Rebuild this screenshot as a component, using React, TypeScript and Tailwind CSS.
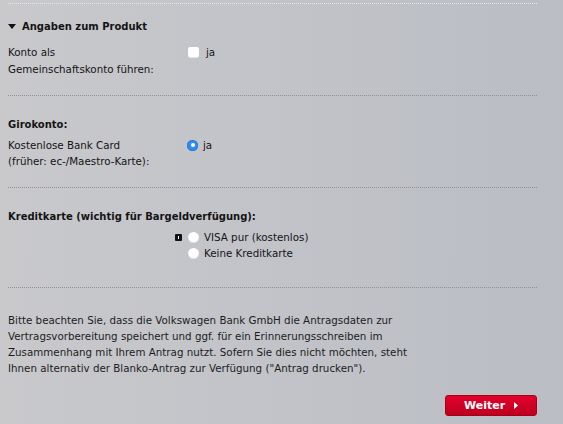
import { useState } from "react";

const sep = "mx-2 w-[529px] border-t border-dotted border-[#8f9196]";

function Radio({ checked }: { checked?: boolean }) {
  return checked ? (
    <span className="flex h-[11px] w-[11px] shrink-0 items-center justify-center rounded-full bg-[#2f8cf5] shadow-[inset_0_0_0_1px_#2a7ad8]">
      <span className="h-[4px] w-[4px] rounded-full bg-white" />
    </span>
  ) : (
    <span className="block h-[11px] w-[11px] shrink-0 rounded-full bg-white shadow-[inset_0_-1px_1px_rgba(0,0,0,0.12)]" />
  );
}

export default function App() {
  const [gemeinsam, setGemeinsam] = useState(false);

  return (
    <div className="h-[424px] w-[563px] overflow-hidden bg-gradient-to-r from-[#c9c9cc] to-[#babdc4] font-['DejaVu_Sans',Verdana,sans-serif] text-[10.3px] leading-[17px] text-[#141414]">
      <div className="pt-[3px]">
        <div className="mx-2 w-[529px] border-t border-dotted border-[#e6e6ea]" />
      </div>

      {/* Produkt */}
      <div className="flex items-center gap-[6px] px-2 pt-[14px] text-[10px] font-bold">
        <svg width="8" height="6" viewBox="0 0 8 6">
          <path d="M0 0h8L4 5z" fill="#111" />
        </svg>
        <span>Angaben zum Produkt</span>
      </div>
      <div className="flex px-2 pt-[9px]">
        <div className="w-[180px]">
          Konto als
          <br />
          Gemeinschaftskonto führen:
        </div>
        <label className="flex h-[17px] items-center gap-[7px]" onClick={() => setGemeinsam(!gemeinsam)}>
          <span className="h-[11px] w-[11px] rounded-[2px] bg-white shadow-[inset_0_-1px_1px_rgba(0,0,0,0.12)]" />
          <span>ja</span>
        </label>
      </div>
      <div className="pt-[17px]">
        <div className={sep} />
      </div>

      {/* Girokonto */}
      <div className="px-2 pt-[20px] text-[10px] font-bold">Girokonto:</div>
      <div className="flex px-2 pt-[4px]">
        <div className="w-[179px] leading-[16px]">
          Kostenlose Bank Card
          <br />
          (früher: ec-/Maestro-Karte):
        </div>
        <div className="flex h-[16px] items-center gap-[5px]">
          <Radio checked />
          <span>ja</span>
        </div>
      </div>
      <div className="pt-[18px]">
        <div className={sep} />
      </div>

      {/* Kreditkarte */}
      <div className="px-2 pt-[20px] text-[10px] font-bold">Kreditkarte (wichtig für Bargeldverfügung):</div>
      <div className="flex flex-col pl-[175px] pt-[4px] leading-[16px]">
        <div className="flex items-center">
          <span className="flex h-[7px] w-[7px] items-center justify-center rounded-[1px] bg-[#111]">
            <span className="h-[3px] w-[1px] bg-white" />
          </span>
          <span className="ml-[6px]">
            <Radio />
          </span>
          <span className="ml-[5px]">VISA pur (kostenlos)</span>
        </div>
        <div className="flex items-center pl-[13px]">
          <Radio />
          <span className="ml-[5px]">Keine Kreditkarte</span>
        </div>
      </div>
      <div className="pt-[26px]">
        <div className={sep} />
      </div>

      {/* Hinweis */}
      <p className="whitespace-nowrap px-2 pt-[24px] leading-[16px] text-[#1c1c1c]">
        Bitte beachten Sie, dass die Volkswagen Bank GmbH die Antragsdaten zur
        <br />
        Vertragsvorbereitung speichert und ggf. für ein Erinnerungsschreiben im
        <br />
        Zusammenhang mit Ihrem Antrag nutzt. Sofern Sie dies nicht möchten, steht
        <br />
        Ihnen alternativ der Blanko-Antrag zur Verfügung ("Antrag drucken").
      </p>

      <div className="flex w-[537px] justify-end pt-[19px]">
        <button className="flex h-[21px] w-[92px] items-center justify-center gap-[9px] rounded-[3px] border border-[#a8001a] bg-gradient-to-b from-[#e4002c] to-[#bd001f] text-[11px] font-bold text-white">
          <span>Weiter</span>
          <svg width="4" height="7" viewBox="0 0 4 7">
            <path d="M0 0l4 3.5L0 7z" fill="#fff" />
          </svg>
        </button>
      </div>
    </div>
  );
}
